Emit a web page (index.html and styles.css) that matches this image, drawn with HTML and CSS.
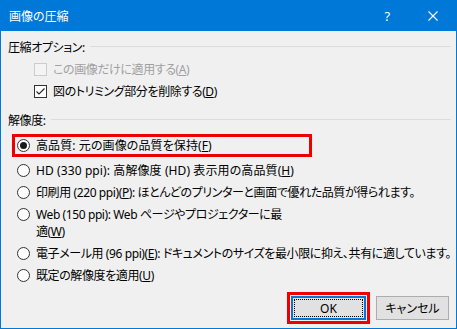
FILE: index.html
```html
<!DOCTYPE html>
<html lang="ja">
<head>
<meta charset="utf-8">
<title>画像の圧縮</title>
<link rel="stylesheet" href="styles.css">
</head>
<body>
<div class="dialog">
  <div class="titlebar">
    <span class="title">画像の圧縮</span>
    <span class="tb-btn tb-help">?</span>
    <span class="tb-btn tb-close">
      <svg width="10" height="10" viewBox="0 0 10 10"><path d="M0.5 0.5L9.5 9.5M9.5 0.5L0.5 9.5" stroke="#fff" stroke-width="1.1" fill="none"/></svg>
    </span>
  </div>
  <div class="content">
    <div class="group-head"><span>圧縮オプション:</span><span class="rule"></span></div>
    <div class="check-row disabled">
      <span class="box"></span>
      <span>この画像だけに適用する(<u>A</u>)</span>
    </div>
    <div class="check-row">
      <span class="box"><svg width="11" height="11" viewBox="0 0 11 11"><path d="M1.5 5.5L4 8L9.5 2.5" stroke="#222" stroke-width="1.1" fill="none"/></svg></span>
      <span>図のトリミング部分を削除する(<u>D</u>)</span>
    </div>
    <div class="group-head head2"><span>解像度:</span><span class="rule"></span></div>
    <div class="radio-row highlight loose">
      <span class="radio checked"></span>
      <span>高品質: 元の画像の品質を保持(<u>F</u>)</span>
    </div>
    <div class="radio-row loose">
      <span class="radio"></span>
      <span>HD (330 ppi): 高解像度 (HD) 表示用の高品質(<u>H</u>)</span>
    </div>
    <div class="radio-row">
      <span class="radio"></span>
      <span>印刷用 (220 ppi)(<u>P</u>): ほとんどのプリンターと画面で優れた品質が得られます。</span>
    </div>
    <div class="radio-row">
      <span class="radio"></span>
      <span>Web (150 ppi): Web ページやプロジェクターに最<br>適(<u>W</u>)</span>
    </div>
    <div class="radio-row">
      <span class="radio"></span>
      <span>電子メール用 (96 ppi)(<u>E</u>): ドキュメントのサイズを最小限に抑え、共有に適しています。</span>
    </div>
    <div class="radio-row">
      <span class="radio"></span>
      <span>既定の解像度を適用(<u>U</u>)</span>
    </div>
  </div>
  <div class="buttons">
    <span class="ok-mark"><span class="btn btn-default">OK</span></span>
    <span class="btn">キャンセル</span>
  </div>
</div>
</body>
</html>
```
FILE: styles.css
```css
* { box-sizing: border-box; }
html, body { margin: 0; padding: 0; }
body {
  font-family: "Noto Sans", "Noto Sans CJK JP", sans-serif;
  font-size: 12px;
  color: #000;
  background: #f0f0f0;
  font-feature-settings: "palt";
  letter-spacing: -0.4px;
}
.dialog {
  width: 457px;
  height: 329px;
  border: 1px solid #0078d7;
  background: #f0f0f0;
  display: flex;
  flex-direction: column;
  overflow: hidden;
}
.titlebar {
  flex: none;
  height: 30px;
  background: #0078d7;
  color: #fff;
  display: flex;
  align-items: center;
  padding-left: 8px;
}
.title { flex: 1; font-size: 12px; line-height: 17px; letter-spacing: 0; }
.tb-btn {
  width: 46px;
  height: 30px;
  display: flex;
  align-items: center;
  justify-content: center;
}
.tb-help { font-size: 13px; }
.content {
  display: flex;
  flex-direction: column;
  gap: 5px;
  padding: 8px 5px 0 7px;
  line-height: 17px;
  white-space: nowrap;
}
.group-head {
  display: flex;
  align-items: center;
  height: 17px;
}
.group-head .rule {
  flex: 1;
  height: 1px;
  background: #dcdcdc;
  margin-left: 5px;
  margin-top: -2px;
}
.head2 { margin-top: 7px; }
.check-row {
  display: flex;
  align-items: flex-start;
  padding-left: 26px;
  height: 17px;
}
.check-row .box {
  width: 13px;
  height: 13px;
  margin-top: 2px;
  margin-right: 6px;
  border: 1px solid #333;
  background: #fff;
  display: flex;
  align-items: center;
  justify-content: center;
}
.check-row.disabled { color: #a0a0a0; }
.check-row.disabled .box { border-color: #cccccc; background: #f4f4f4; }
.radio-row {
  display: flex;
  align-items: flex-start;
  padding-left: 9px;
}
.radio-row.loose { letter-spacing: 0.1px; }
.radio-row.highlight {
  margin-left: 4px;
  width: 300px;
  padding-left: 2px;
  border: 3px solid #ee0000;
}
.radio {
  flex: none;
  width: 13px;
  height: 13px;
  border-radius: 50%;
  border: 1px solid #333;
  background: #fff;
  margin-top: 2px;
  margin-right: 6px;
  display: flex;
  align-items: center;
  justify-content: center;
}
.radio.checked::before {
  content: "";
  width: 7px;
  height: 7px;
  border-radius: 50%;
  background: #1a1a1a;
}
.buttons {
  flex: none;
  display: flex;
  justify-content: flex-end;
  align-items: center;
  gap: 6px;
  padding-right: 7px;
  margin-top: 8px;
}
.ok-mark {
  display: flex;
  border: 3px solid #ee0000;
  padding: 1px;
}
.btn {
  width: 73px;
  height: 24px;
  background: #e1e1e1;
  border: 1px solid #adadad;
  display: flex;
  align-items: center;
  justify-content: center;
  line-height: 17px;
  letter-spacing: 0;
}
.btn-default {
  position: relative;
  width: 75px;
  border: 2px solid #0078d7;
}
.btn-default::after {
  content: "";
  position: absolute;
  inset: 1px;
  border: 1px dotted #000;
}
```
